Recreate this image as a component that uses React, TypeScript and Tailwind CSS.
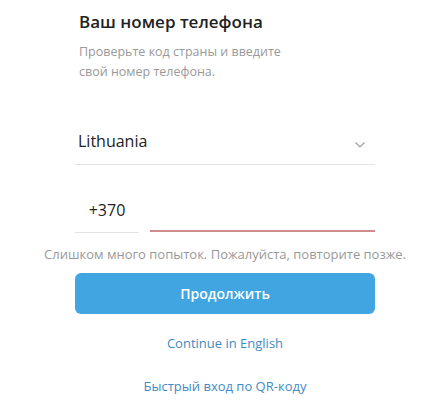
import React from "react";

export default function App() {
  return (
    <div
      className="w-[428px] h-[419px] bg-white overflow-hidden"
      style={{ fontFamily: '"Open Sans", "Noto Sans", sans-serif' }}
    >
      <div className="w-[300px] ml-[75px] flex flex-col">
        <div className="pl-[4px] pt-[9px]">
          <h1 className="text-[17px] leading-[25px] font-semibold text-[#222222]">
            Ваш номер телефона
          </h1>
          <p className="mt-[8px] text-[12.5px] leading-[20px] text-[#999999]">
            Проверьте код страны и введите
            <br />
            свой номер телефона.
          </p>
        </div>

        <div className="mt-[41px] h-[42px] flex items-end justify-between border-b border-[#e3e3e3] pb-[12px]">
          <span className="pl-[3px] text-[16px] leading-[22px] text-[#222222]">Lithuania</span>
          <svg width="12" height="8" viewBox="0 0 12 8" className="mr-[9px] mb-[3px]">
            <path d="M1.5 1.5 L6 6 L10.5 1.5" fill="none" stroke="#a0a0a0" strokeWidth="1.2" />
          </svg>
        </div>

        <div className="mt-[27px] flex items-end gap-[11px]">
          <div className="w-[64px] h-[40px] flex items-end justify-center border-b border-[#e3e3e3] pb-[11px]">
            <span className="text-[16px] leading-[22px] text-[#222222]">+370</span>
          </div>
          <div className="flex-1 h-[40px] border-b-2 border-[#d08c8c] mb-[1px]" />
        </div>

        <p className="mt-[12px] -mx-[40px] text-center text-[13px] leading-[18px] text-[#999999] whitespace-nowrap">
          Слишком много попыток. Пожалуйста, повторите позже.
        </p>

        <button className="mt-[10px] h-[41px] w-full rounded-[6px] bg-[#40a5e0] text-white text-[14px] font-semibold">
          Продолжить
        </button>

        <div className="mt-[20px] text-center text-[13px] leading-[18px] text-[#3f8bc4]">
          Continue in English
        </div>
        <div className="mt-[25px] text-center text-[13px] leading-[18px] text-[#3f8bc4]">
          Быстрый вход по QR-коду
        </div>
      </div>
    </div>
  );
}
